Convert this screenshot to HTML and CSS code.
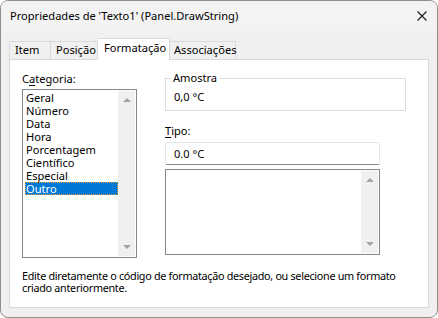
FILE: index.html
```html
<!DOCTYPE html>
<html lang="pt">
<head>
  <meta charset="UTF-8">
  <title>Propriedades de 'Texto1'</title>
  <link rel="stylesheet" href="styles.css">
</head>
<body>
  <div class="window">
    <div class="titlebar">
      <span class="title">Propriedades de 'Texto1' (Panel.DrawString)</span>
      <svg class="close" width="10" height="10" viewBox="0 0 10 10">
        <path d="M0.5 0.5 L9.5 9.5 M9.5 0.5 L0.5 9.5" stroke="#1a1a1a" stroke-width="1.1" fill="none"/>
      </svg>
    </div>

    <div class="content">
      <div class="tabs">
        <div class="tab tab-item">Item</div>
        <div class="tab tab-pos">Posição</div>
        <div class="tab tab-fmt selected">Formatação</div>
        <div class="tab tab-assoc">Associações</div>
      </div>

      <div class="panel">
        <div class="columns">
          <div class="col-left">
            <div class="label">C<u>a</u>tegoria:</div>
            <div class="listbox list-cat">
              <ul class="items">
                <li>Geral</li>
                <li>Número</li>
                <li>Data</li>
                <li>Hora</li>
                <li>Porcentagem</li>
                <li>Científico</li>
                <li>Especial</li>
                <li class="sel">Outro</li>
              </ul>
              <div class="scrollbar">
                <span class="arrow up"></span>
                <span class="arrow down"></span>
              </div>
            </div>
          </div>

          <div class="col-right">
            <fieldset class="sample">
              <legend>Amostra</legend>
              <div class="sample-value">0,0 °C</div>
            </fieldset>

            <div class="label label-tipo"><u>T</u>ipo:</div>
            <div class="textbox">0.0 °C</div>

            <div class="listbox list-tipo">
              <ul class="items"></ul>
              <div class="scrollbar">
                <span class="arrow up"></span>
                <span class="arrow down"></span>
              </div>
            </div>
          </div>
        </div>

        <p class="hint">Edite diretamente o código de formatação desejado, ou selecione um formato criado anteriormente.</p>
      </div>
    </div>
  </div>
</body>
</html>
```

FILE: styles.css
```css
html, body {
  margin: 0;
  padding: 0;
}

body {
  width: 438px;
  height: 318px;
  background: #ffffff;
  font-family: "Noto Sans", "Open Sans", sans-serif;
  font-size: 11.1px;
  color: #000;
}

.window {
  box-sizing: border-box;
  width: 438px;
  height: 318px;
  border: 1px solid #8e8e8e;
  border-radius: 8px;
  background: #f0f0f0;
  overflow: hidden;
  display: flex;
  flex-direction: column;
}

.titlebar {
  height: 30px;
  display: flex;
  align-items: center;
  justify-content: space-between;
  padding: 0 10px 0 9px;
  background: #f3f3f3;
}

.title {
  line-height: 16px;
  margin-top: -1px;
}

.close {
  display: block;
  margin-top: -1px;
}

.content {
  flex: 1;
  display: flex;
  flex-direction: column;
  padding: 0 8px 9px 8px;
}

.tabs {
  display: flex;
  align-items: flex-end;
  height: 28px;
}

.tab {
  box-sizing: border-box;
  height: 18px;
  border: 1px solid #d9d9d9;
  border-bottom: none;
  background: #f0f0f0;
  line-height: 16px;
  padding: 0 5px;
  white-space: nowrap;
}

.tab + .tab {
  border-left: none;
}

.tab-item { width: 42px; }
.tab-pos { width: 47px; }
.tab-assoc { width: 66px; padding-left: 4px; }

.tab.selected {
  width: 72px;
  height: 22px;
  background: #ffffff;
  margin-bottom: -1px;
  position: relative;
  z-index: 1;
  padding: 1px 0 0 6px;
  line-height: 16px;
}

.panel {
  flex: 1;
  box-sizing: border-box;
  background: #ffffff;
  border: 1px solid #d9d9d9;
  padding: 12px 8px 0 12px;
}

.columns {
  display: flex;
  align-items: flex-start;
  gap: 28px;
}

.label {
  line-height: 14px;
  height: 14px;
}

.label u {
  text-underline-offset: 2px;
}

.listbox {
  box-sizing: border-box;
  display: flex;
  border: 1px solid #828790;
  background: #ffffff;
  padding: 1px;
}

.list-cat {
  width: 115px;
  height: 169px;
  margin-top: 3px;
}

.items {
  list-style: none;
  margin: 0;
  padding: 0 0 0 1px;
  flex: 1;
}

.items li {
  line-height: 13px;
  height: 13px;
  padding-left: 1px;
}

.items li.sel {
  background: #0078d7;
  color: #ffffff;
  outline: 1px dotted #e8a040;
  outline-offset: -1px;
}

.scrollbar {
  width: 17px;
  background: #f0f0f0;
  display: flex;
  flex-direction: column;
  justify-content: space-between;
  align-items: center;
  padding: 7px 0 7px 0;
}

.arrow {
  width: 0;
  height: 0;
  border-left: 4px solid transparent;
  border-right: 4px solid transparent;
}

.arrow.up {
  border-bottom: 4px solid #a3a3a3;
}

.arrow.down {
  border-top: 4px solid #a3a3a3;
}

.col-right {
  display: flex;
  flex-direction: column;
  width: 241px;
}

.sample {
  box-sizing: border-box;
  margin: 0;
  width: 241px;
  height: 40px;
  border: 1px solid #dcdcdc;
  padding: 0 5px;
  margin-top: -1px;
}

.sample legend {
  padding: 0 2px;
  line-height: 14px;
}

.sample-value {
  padding: 5px 0 0 3px;
  line-height: 14px;
}

.label-tipo {
  margin-top: 13px;
}

.textbox {
  box-sizing: border-box;
  width: 215px;
  height: 23px;
  margin-top: 4px;
  border: 1px solid #e5e5e5;
  border-bottom: 1px solid #8a8a8a;
  border-radius: 2px;
  padding: 3px 0 0 8px;
  line-height: 15px;
}

.list-tipo {
  width: 215px;
  height: 86px;
  margin-top: 4px;
}

.hint {
  margin: 12px 0 0 0;
  font-size: 10.8px;
  line-height: 12px;
  letter-spacing: -0.3px;
}
```
